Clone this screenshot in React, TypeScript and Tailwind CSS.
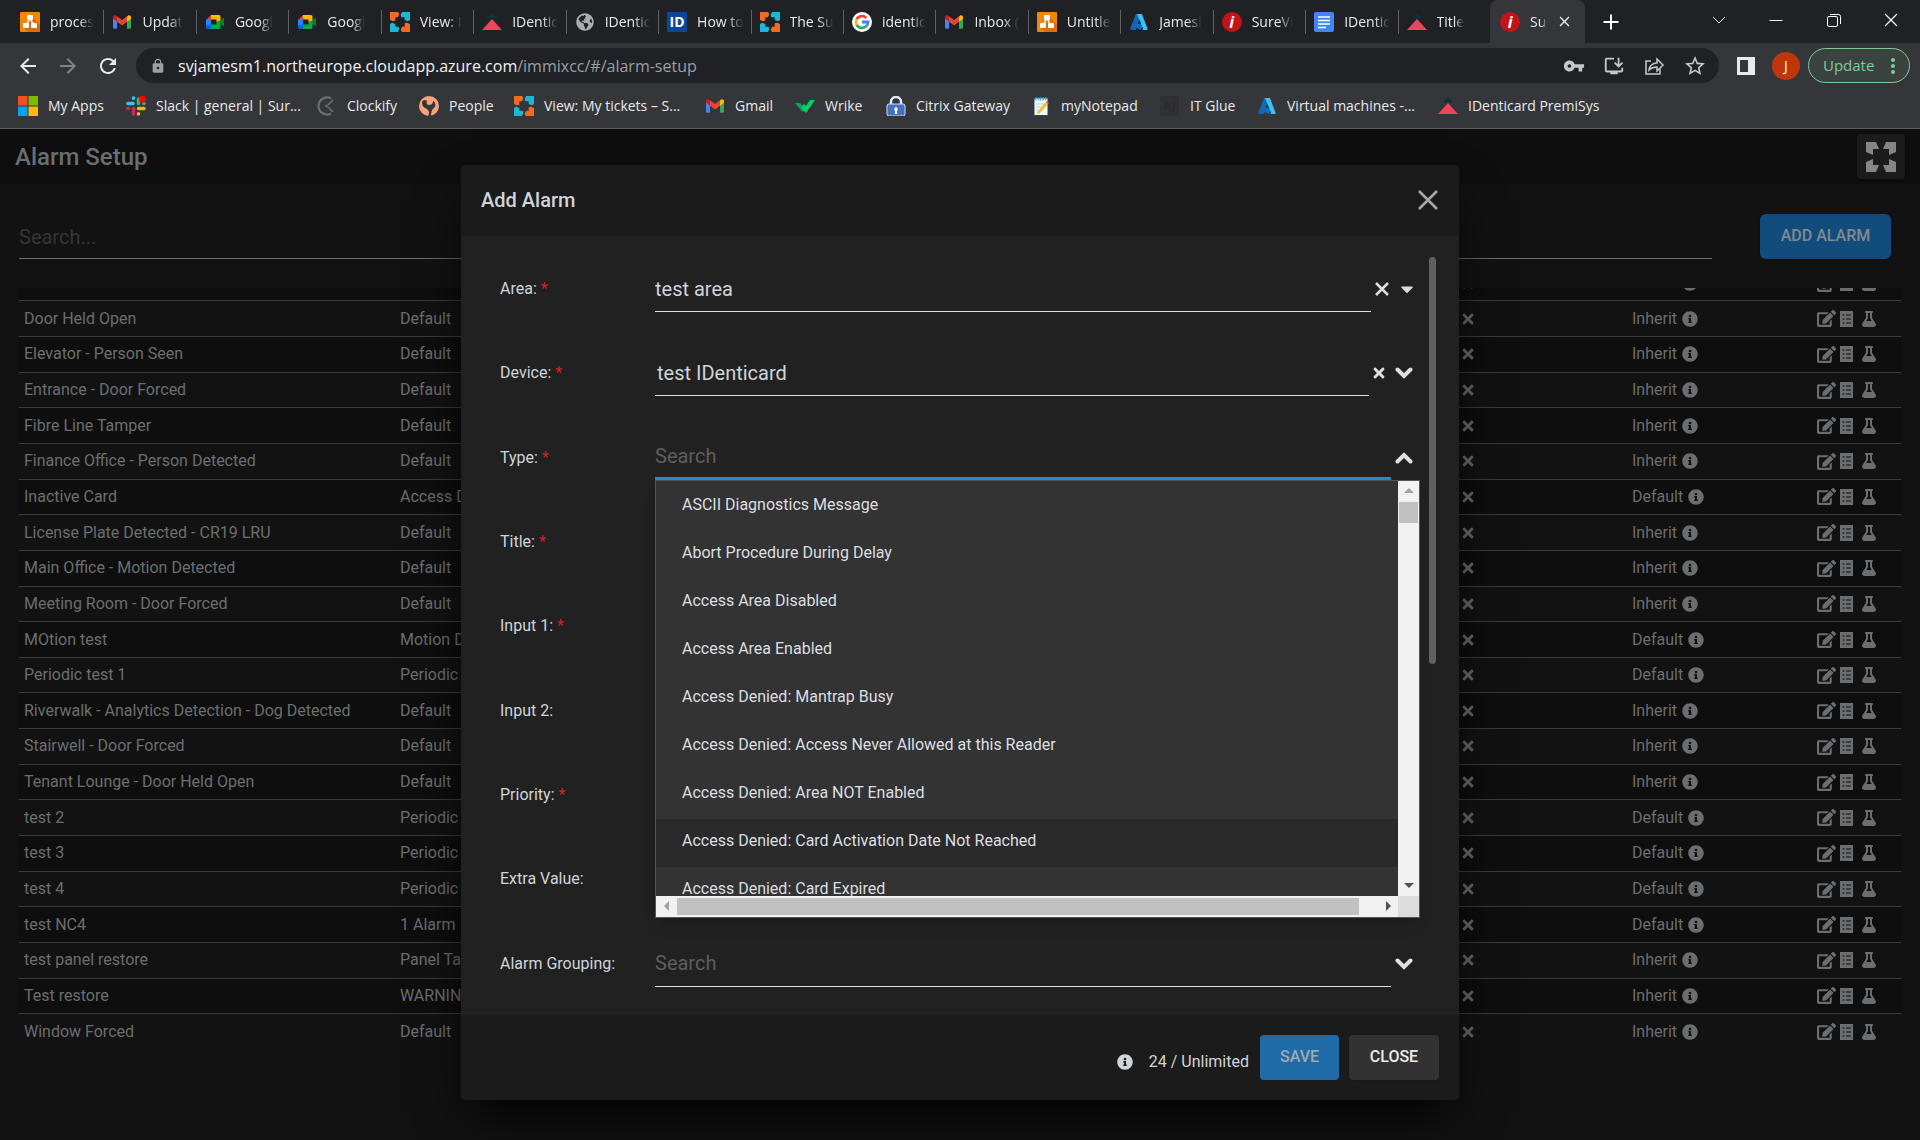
import { type ReactNode } from "react";
import clsx from "clsx";
import {
  FaCaretDown,
  FaEdit,
  FaFlask,
  FaGlobeAmericas,
  FaInfoCircle,
  FaTimes,
} from "react-icons/fa";
import {
  MdArrowBack,
  MdArrowForward,
  MdClose,
  MdInstallDesktop,
  MdLock,
  MdMoreVert,
  MdRefresh,
  MdStarBorder,
  MdVpnKey,
} from "react-icons/md";

/* ---------- site icons ---------- */

function DrawIo() {
  return (
    <svg viewBox="0 0 20 20" className="size-5">
      <rect width="20" height="20" rx="1" fill="#f08705" />
      <path d="M12 4l8 9v7H8l-5-5z" fill="#df6c0c" />
      <path d="M10 6L6 14M10 6l4 8" stroke="#fff" strokeWidth="1.6" />
      <rect x="7" y="3" width="6" height="5" rx="1" fill="#fff" />
      <rect x="3" y="11" width="6" height="5" rx="1" fill="#fff" />
      <rect x="11" y="11" width="6" height="5" rx="1" fill="#fff" />
    </svg>
  );
}

function Gmail() {
  return (
    <svg viewBox="0 0 20 20" className="size-5">
      <path d="M1 6v9.500a1.200 1.200 0 0 0 1.200 1.200H5V8z" fill="#4285f4" />
      <path d="M19 6v9.500a1.200 1.200 0 0 1-1.200 1.200H15V8z" fill="#34a853" />
      <path d="M15 4.500v5.300l4-3V5.200c0-1.700-1.900-2.500-3.200-1.500z" fill="#fbbc04" />
      <path d="M5 9.800V4.300l5 3.800 5-3.800v5.500l-5 3.800z" fill="#ea4335" />
      <path d="M1 5.200v1.600l4 3V4.300l-.8-.6C2.900 2.700 1 3.500 1 5.200z" fill="#c5221f" />
    </svg>
  );
}

function Meet() {
  return (
    <svg viewBox="0 0 20 20" className="size-5">
      <path d="M6 3v5H1z" fill="#ea4335" />
      <path d="M1 8h5v5H1z" fill="#2684fc" />
      <path d="M1 13h5v4H2.500A1.500 1.500 0 0 1 1 15.500z" fill="#0066da" />
      <path d="M6 3h8a1.500 1.500 0 0 1 1.500 1.500V9l-4 1V7.500H6z" fill="#ffba00" />
      <path d="M6 12.500h5.500V10l4-1v6.500A1.500 1.500 0 0 1 14 17H6z" fill="#00ac47" />
      <path d="M14 10l4-4c.5-.4 1-.2 1 .4v7.200c0 .6-.5.800-1 .4z" fill="#00832d" />
    </svg>
  );
}

function SureView() {
  return (
    <svg viewBox="0 0 30 30" className="size-5">
      <path d="M0 0h12l2 3-2 5H8v5l-4 1-4-2z" fill="#f26b21" />
      <path d="M30 0v12l-3 2-5-2V8h-5l-1-4 2-4z" fill="#1fb5d4" />
      <path d="M0 30V18l3-2 5 2v4h5l1 4-2 4z" fill="#1fb5d4" />
      <path d="M30 30H18l-2-3 2-5h4v-5l4-1 4 2z" fill="#f26b21" />
    </svg>
  );
}

function Identicard() {
  return (
    <svg viewBox="0 0 20 20" className="size-5">
      <path d="M10 1l5 5H5z" fill="#08343d" />
      <path d="M10 7l10 11H0z" fill="#ee4460" />
    </svg>
  );
}

function Globe() {
  return <FaGlobeAmericas size={18} className="text-[#a9adb2]" />;
}

function IdBadge() {
  return (
    <span className="flex size-5 items-center justify-center bg-[#0b4696] text-sm font-bold text-white">
      ID
    </span>
  );
}

function Google() {
  return (
    <svg viewBox="0 0 20 20" className="size-5">
      <circle cx="10" cy="10" r="10" fill="#fff" />
      <g fill="none" strokeWidth="2.800">
        <path d="M14.300 6A6 6 0 0 0 4.700 7.200" stroke="#ea4335" />
        <path d="M4.700 7.200a6 6 0 0 0 0 5.600" stroke="#fbbc05" />
        <path d="M4.700 12.800a6 6 0 0 0 9.200 1.700" stroke="#34a853" />
        <path d="M13.900 14.500A6 6 0 0 0 16 10h-6" stroke="#4285f4" />
      </g>
    </svg>
  );
}

function Azure() {
  return (
    <svg viewBox="0 0 20 20" className="size-5">
      <path d="M7 2h5L7 18H2.500c-1 0-1.500-.8-1.200-1.700z" fill="#1267b4" />
      <path d="M7.500 12h8l-4 6-7-4z" fill="#0a6fc2" />
      <path d="M8 2h5l5.500 14.500c.3.800-.2 1.500-1 1.500h-4.700c1 0 1.400-.8 1.100-1.700z" fill="#3ac0f2" />
    </svg>
  );
}

function Immix() {
  return (
    <span className="flex size-5 items-center justify-center rounded-full bg-[#c4121a] font-['Open_Sans',sans-serif] text-base leading-none font-bold text-white italic">
      i
    </span>
  );
}

function Docs() {
  return (
    <svg viewBox="0 0 20 20" className="size-5">
      <rect width="20" height="20" rx="2" fill="#4285f4" />
      <path d="M4 5h12M4 8.500h12M4 12h12M4 15.500h8" stroke="#fff" strokeWidth="1.700" />
    </svg>
  );
}

function Windows() {
  return (
    <svg viewBox="0 0 20 20" className="size-5">
      <path d="M0 0h9.500v9.500H0z" fill="#f25022" />
      <path d="M10.500 0H20v9.500h-9.500z" fill="#7fba00" />
      <path d="M0 10.500h9.500V20H0z" fill="#00a4ef" />
      <path d="M10.500 10.500H20V20h-9.500z" fill="#ffb900" />
    </svg>
  );
}

function Slack() {
  return (
    <svg viewBox="0 0 20 20" className="size-5">
      <g strokeWidth="3.600" strokeLinecap="round">
        <path d="M2 7.500h5M7.500 2v.2" stroke="#36c5f0" />
        <path d="M12.500 3v4.500M18 7.500h-.2" stroke="#2eb67d" />
        <path d="M12.500 12.500H18M12.500 18v-.2" stroke="#ecb22e" />
        <path d="M7.500 12.500V18M2 12.500h.2" stroke="#e01e5a" />
      </g>
      <circle cx="16.500" cy="3.200" r="3.500" fill="#f00" />
    </svg>
  );
}

function Clockify() {
  return (
    <svg viewBox="0 0 20 20" className="size-5" fill="none" stroke="#6b6e72">
      <path d="M14 2.500A8.500 8.500 0 1 0 14 17.500" strokeWidth="2.200" />
      <path d="M11 9l5-5M11 11l5 5" strokeWidth="1.700" />
      <circle cx="9.500" cy="10" r="1" fill="#6b6e72" />
    </svg>
  );
}

function People() {
  return (
    <svg viewBox="0 0 20 20" className="size-5">
      <circle cx="10" cy="10" r="10" fill="#f7a278" />
      <path
        d="M3 7c0-3 3-4 5-2-1 2 0 4 2 4s4-1 4-4c3 1 3 5 1 7-2 1-3 4-3 8H9c2-3 1-5-1-7-3-1-5-3-5-6z"
        fill="#35363a"
      />
      <circle cx="11" cy="5" r="2.500" fill="#f7a278" />
    </svg>
  );
}

function Wrike() {
  return (
    <svg viewBox="0 0 20 20" className="size-5">
      <path d="M0 7h5l5 6-2.500 3z" fill="#08a75b" />
      <path d="M7 10l2-2 2 2 4-6h5l-9 13-4-4z" fill="#08cf65" />
    </svg>
  );
}

function Citrix() {
  return (
    <svg viewBox="0 0 20 20" className="size-5">
      <path d="M5 9V6a5 5 0 0 1 10 0v3" fill="none" stroke="#dfe8f8" strokeWidth="2.500" />
      <rect x="1" y="8" width="18" height="12" rx="2" fill="#4870c0" stroke="#cfdcf5" />
      <path d="M10 11a2 2 0 0 1 1 3.500V18H9v-3.500A2 2 0 0 1 10 11z" fill="#fff" />
    </svg>
  );
}

function Notepad() {
  return (
    <svg viewBox="0 0 20 20" className="size-5">
      <rect x="3" y="2" width="14" height="17.500" rx="1" fill="#f6f8fa" stroke="#1d4a5f" />
      <path d="M4 3h12" stroke="#48b8d8" strokeWidth="3" strokeDasharray="1.500 1" />
      <path d="M5 8h9M5 11h5M5 14h4" stroke="#b7c4cd" />
      <path d="M7 15l8-9 2 2-8 9-3 1z" fill="#f4c027" />
      <path d="M15 6l1-1 2 2-1 1z" fill="#e0483c" />
    </svg>
  );
}

function ItGlue() {
  return (
    <svg viewBox="0 0 20 20" className="size-5" stroke="#2c2c2f" fill="#313135">
      <rect x="1" y="1" width="17" height="18" />
      <path d="M5 15V5l9 10V5M5 9l7 8" strokeWidth="2" fill="none" />
    </svg>
  );
}

/* ---------- data ---------- */

const tabs: { icon: ReactNode; title: string }[] = [
  { icon: <DrawIo />, title: "proces" },
  { icon: <Gmail />, title: "Updat" },
  { icon: <Meet />, title: "Googl" },
  { icon: <Meet />, title: "Googl" },
  { icon: <SureView />, title: "View: I" },
  { icon: <Identicard />, title: "IDentic" },
  { icon: <Globe />, title: "IDentic" },
  { icon: <IdBadge />, title: "How to" },
  { icon: <SureView />, title: "The Su" },
  { icon: <Google />, title: "identic" },
  { icon: <Gmail />, title: "Inbox (" },
  { icon: <DrawIo />, title: "Untitle" },
  { icon: <Azure />, title: "Jamesl" },
  { icon: <Immix />, title: "SureVi" },
  { icon: <Docs />, title: "IDentic" },
  { icon: <Identicard />, title: "Title" },
];

const bookmarks: { icon: ReactNode; title: string }[] = [
  { icon: <Windows />, title: "My Apps" },
  { icon: <Slack />, title: "Slack | general | Sur..." },
  { icon: <Clockify />, title: "Clockify" },
  { icon: <People />, title: "People" },
  { icon: <SureView />, title: "View: My tickets – S..." },
  { icon: <Gmail />, title: "Gmail" },
  { icon: <Wrike />, title: "Wrike" },
  { icon: <Citrix />, title: "Citrix Gateway" },
  { icon: <Notepad />, title: "myNotepad" },
  { icon: <ItGlue />, title: "IT Glue" },
  { icon: <Azure />, title: "Virtual machines -..." },
  { icon: <Identicard />, title: "IDenticard PremiSys" },
];

const alarms: [name: string, type: string, grouping: string][] = [
  ["Door Held Open", "Default", "Inherit"],
  ["Elevator - Person Seen", "Default", "Inherit"],
  ["Entrance - Door Forced", "Default", "Inherit"],
  ["Fibre Line Tamper", "Default", "Inherit"],
  ["Finance Office - Person Detected", "Default", "Inherit"],
  ["Inactive Card", "Access Denied", "Default"],
  ["License Plate Detected - CR19 LRU", "Default", "Inherit"],
  ["Main Office - Motion Detected", "Default", "Inherit"],
  ["Meeting Room - Door Forced", "Default", "Inherit"],
  ["MOtion test", "Motion Detected", "Default"],
  ["Periodic test 1", "Periodic", "Default"],
  ["Riverwalk - Analytics Detection - Dog Detected", "Default", "Inherit"],
  ["Stairwell - Door Forced", "Default", "Inherit"],
  ["Tenant Lounge - Door Held Open", "Default", "Inherit"],
  ["test 2", "Periodic", "Default"],
  ["test 3", "Periodic", "Default"],
  ["test 4", "Periodic", "Default"],
  ["test NC4", "1 Alarm", "Default"],
  ["test panel restore", "Panel Tamper", "Inherit"],
  ["Test restore", "WARNING", "Inherit"],
  ["Window Forced", "Default", "Inherit"],
];

const types = [
  "ASCII Diagnostics Message",
  "Abort Procedure During Delay",
  "Access Area Disabled",
  "Access Area Enabled",
  "Access Denied: Mantrap Busy",
  "Access Denied: Access Never Allowed at this Reader",
  "Access Denied: Area NOT Enabled",
  "Access Denied: Card Activation Date Not Reached",
  "Access Denied: Card Expired",
];

/* ---------- browser ---------- */

function Tab({ icon, title }: { icon: ReactNode; title: string }) {
  return (
    <button className="flex h-6 min-w-0 flex-1 items-center gap-2.5 border-r border-[#5f6368] pl-2 last:border-r-0">
      <span className="flex w-5 shrink-0 justify-center">{icon}</span>
      <span className="mask-r-from-65% text-left whitespace-nowrap">{title}</span>
    </button>
  );
}

function TabStrip() {
  return (
    <div className="flex h-[43px] items-center bg-[#202124] pl-3 text-sm text-[#e8eaed]">
      <div className="flex w-[1478px]">
        {tabs.map((tab, i) => (
          <Tab key={i} {...tab} />
        ))}
      </div>
      <button className="flex h-full w-[95px] items-center gap-2.5 rounded-t-lg bg-[#35363a] pr-3 pl-2.5">
        <span className="shrink-0">
          <Immix />
        </span>
        <span className="mask-r-from-75% text-left">Su</span>
        <MdClose size={17} className="ml-auto shrink-0" />
      </button>
      <button aria-label="New tab" className="ml-4">
        <svg viewBox="0 0 20 20" className="size-5" stroke="#fff" strokeWidth="2">
          <path d="M10 2.500v15M2.500 10h15" />
        </svg>
      </button>
      <div className="ml-auto grid w-[230px] grid-cols-4 justify-items-center pb-1">
        <button aria-label="Search tabs">
          <svg viewBox="0 0 20 20" className="size-5" fill="none" stroke="#e8eaed">
            <path d="M4 7l6 6 6-6" />
          </svg>
        </button>
        <button aria-label="Minimize">
          <svg viewBox="0 0 20 20" className="size-5" fill="none" stroke="#fff">
            <path d="M3.500 10.500h13" />
          </svg>
        </button>
        <button aria-label="Restore">
          <svg viewBox="0 0 20 20" className="size-5" fill="none" stroke="#fff">
            <rect x="3.500" y="6.500" width="10" height="10" rx="1.500" />
            <path d="M6 4.500h8.500a2 2 0 0 1 2 2V14" />
          </svg>
        </button>
        <button aria-label="Close window">
          <svg viewBox="0 0 20 20" className="size-5" fill="none" stroke="#fff" strokeWidth="1.200">
            <path d="M4 4l12 12M16 4L4 16" />
          </svg>
        </button>
      </div>
    </div>
  );
}

function Toolbar() {
  return (
    <div className="flex h-10 items-end bg-[#35363a] pr-2.5 pl-4 text-[#e8eaed]">
      <div className="flex h-[35px] items-center gap-4 pr-4">
        <button aria-label="Back">
          <MdArrowBack size={24} />
        </button>
        <button aria-label="Forward">
          <MdArrowForward size={24} className="text-[#808285]" />
        </button>
        <button aria-label="Reload">
          <MdRefresh size={24} />
        </button>
      </div>
      <div className="flex h-[35px] flex-1 items-center rounded-full bg-[#202124] pr-3 pl-3.5">
        <MdLock size={16} className="text-[#9aa0a6]" />
        <div className="ml-3 flex-1 text-base text-[#9aa0a6]">
          <span className="text-[#f1f3f4]">svjamesm1.northeurope.cloudapp.azure.com</span>
          /immixcc/#/alarm-setup
        </div>
        <div className="flex items-center gap-[18px] text-[#c4c7cb]">
          <MdVpnKey size={22} />
          <MdInstallDesktop size={22} />
          <svg viewBox="0 0 22 22" className="size-[22px]" fill="none" stroke="currentColor" strokeWidth="1.500">
            <path d="M8 6H3v13h14v-5" />
            <path d="M6 15c1-5 4-7 8-7V4l6 6-6 6v-4c-4 0-6 1-8 3z" />
          </svg>
          <MdStarBorder size={24} />
        </div>
      </div>
      <div className="flex h-[35px] items-center pl-[18px]">
        <svg viewBox="0 0 18 18" className="size-[18px]">
          <path d="M0 0h18v18H0z" fill="#e8eaed" />
          <path d="M3 3h8v12H3z" fill="#35363a" />
        </svg>
        <span className="ml-[17px] flex size-7 items-center justify-center rounded-full bg-[#bf360c] text-sm text-white">
          J
        </span>
        <button className="ml-2 flex h-[35px] w-[102px] items-center justify-between rounded-full border border-[#81c995] bg-[#3a4340] pr-1 pl-3.5 text-[15px] text-[#81c995]">
          Update
          <MdMoreVert size={24} />
        </button>
      </div>
    </div>
  );
}

function BookmarksBar() {
  return (
    <nav className="grid h-[46px] grid-cols-[108px_191px_102px_95px_191px_90px_91px_145px_129px_97px_181px_auto] items-center border-b border-[#5c5d60] bg-[#35363a] pl-[18px] text-sm text-[#e8eaed]">
      {bookmarks.map((b) => (
        <a key={b.title} href="#" className="flex items-center gap-2.5 whitespace-nowrap">
          {b.icon}
          {b.title}
        </a>
      ))}
    </nav>
  );
}

/* ---------- alarm list ---------- */

function ListIcon() {
  return (
    <svg viewBox="0 0 13 16" className="h-4 w-[13px]">
      <path d="M0 0h13v16H0z" fill="currentColor" />
      <path d="M2.500 4h2M2.500 8h2M2.500 12h2M6 4h5M6 8h5M6 12h5" stroke="#2b2c2d" strokeWidth="1.300" />
    </svg>
  );
}

function RowActions() {
  return (
    <div className="flex items-center">
      <button aria-label="Edit">
        <FaEdit size={19} />
      </button>
      <button aria-label="Details" className="ml-1">
        <ListIcon />
      </button>
      <button aria-label="Test" className="ml-2">
        <FaFlask size={16} />
      </button>
    </div>
  );
}

function AlarmTable() {
  return (
    <div className="mx-[19px] mt-[29px] flex h-[761px] flex-col justify-end overflow-hidden">
      <table className="h-[783px] w-full shrink-0 table-fixed border-collapse text-base">
        <colgroup>
          <col className="w-[376px]" />
          <col />
          <col className="w-[172px]" />
          <col className="w-[185px]" />
          <col className="w-[84px]" />
        </colgroup>
        <tbody>
          {[["", "", "Inherit"], ...alarms].map(([name, type, grouping], i) => (
            <tr key={i} className="border-b border-[#3b3b3b] odd:bg-[#0e0e0e] last:border-b-0">
              <td className="truncate pl-[5px]">{name}</td>
              <td className="truncate pl-[5px]">{type}</td>
              <td>
                <FaTimes size={16} className="text-[#68696b]" />
              </td>
              <td>
                <span className="flex items-center gap-[5px]">
                  {grouping}
                  <FaInfoCircle size={16} />
                </span>
              </td>
              <td>
                <RowActions />
              </td>
            </tr>
          ))}
        </tbody>
      </table>
    </div>
  );
}

function AlarmSetup() {
  return (
    <div className="bg-[#121212] text-[#6b6e71]">
      <header className="flex h-[55px] items-center justify-between bg-[#0e0e0e] px-[15px]">
        <h1 className="text-2xl font-medium">Alarm Setup</h1>
        <button
          aria-label="Full screen"
          className="flex h-[45px] w-12 items-center justify-center rounded bg-[#1b1b1b] text-[#858585] shadow"
        >
          <svg viewBox="0 0 30 30" className="size-[30px]" fill="currentColor">
            <path d="M0 0h10l3 7H7v6l-7-3zM30 0H20l-3 7h6v6l7-3zM0 30h10l3-7H7v-6l-7 3zM30 30H20l-3-7h6v-6l7 3z" />
          </svg>
        </button>
      </header>
      <div className="flex items-start pt-[30px] pr-[29px] pl-[19px]">
        <input
          aria-label="Search alarms"
          placeholder="Search..."
          className="h-[45px] flex-1 border-b border-[#6c6c6c] pt-0.5 text-xl placeholder:text-[#363636]"
        />
        <button className="ml-12 h-[45px] w-[131px] rounded-md bg-[#114c7c] pb-0.5 text-base font-medium text-[#84898e] shadow">
          ADD ALARM
        </button>
      </div>
      <AlarmTable />
      <div className="h-[90px]" />
    </div>
  );
}

/* ---------- dialog ---------- */

function Field({
  label,
  id,
  required,
  children,
}: {
  label: string;
  id: string;
  required?: boolean;
  children?: ReactNode;
}) {
  return (
    <div className="relative flex items-center">
      <label htmlFor={id} className="w-[155px] shrink-0 pt-0.5 text-base">
        {label}
        {required && <span className="text-[#d32027]"> *</span>}
      </label>
      <div className="flex h-12 flex-1 items-center">
        {children ?? <input id={id} className="h-full w-full border-b border-[#e0e0e0]" />}
      </div>
    </div>
  );
}

function Chevron({ up }: { up?: boolean }) {
  return (
    <svg
      viewBox="0 0 18 14"
      className="ml-1 h-3.5 w-[18px] shrink-0"
      fill="none"
      stroke="#e0e0e0"
      strokeWidth="4"
      strokeLinecap="round"
    >
      <path d={up ? "M2.500 10.500L9 4l6.500 6.500" : "M2.500 3.500L9 10l6.500-6.500"} />
    </svg>
  );
}

function ScrollButton({ points, active, label }: { points: string; active?: boolean; label: string }) {
  return (
    <button aria-label={label} className="flex size-[21px] shrink-0 items-center justify-center">
      <svg viewBox="0 0 10 10" className="size-2.5">
        <polygon points={points} fill={active ? "#505050" : "#a3a3a3"} />
      </svg>
    </button>
  );
}

function TypeMenu() {
  return (
    <div className="absolute top-[65px] right-[-5px] left-[155px] z-10 border border-[#555] shadow-lg">
      <div className="flex h-[415px] bg-[#333]">
        <ul className="flex-1 overflow-hidden pt-0.5 text-[#dcdfe2]">
          {types.map((t, i) => (
            <li key={t} className={clsx("h-12 pt-2.5 pl-[26px] text-base", i === 7 && "bg-[#2a2a2a]")}>
              {t}
            </li>
          ))}
        </ul>
        <div className="flex w-[21px] flex-col items-center bg-[#f1f1f1]">
          <ScrollButton label="Scroll up" points="0,7 5,2 10,7" />
          <div className="h-[21px] w-[19px] bg-[#c1c1c1]" />
          <div className="mt-auto">
            <ScrollButton label="Scroll down" points="0,3 5,8 10,3" active />
          </div>
        </div>
      </div>
      <div className="flex h-[21px] bg-[#dcdcdc]">
        <div className="flex flex-1 items-center bg-[#f1f1f1]">
          <ScrollButton label="Scroll left" points="7,0 2,5 7,10" />
          <div className="mr-[18px] h-[17px] flex-1 bg-[#c1c1c1]" />
          <ScrollButton label="Scroll right" points="3,0 8,5 3,10" active />
        </div>
        <div className="w-[21px]" />
      </div>
    </div>
  );
}

const field = "min-w-0 flex-1 pt-0.5 text-xl placeholder:text-[#5e5e5e]";

function AddAlarmDialog() {
  return (
    <div
      role="dialog"
      aria-label="Add Alarm"
      className="w-[998px] overflow-hidden rounded bg-[#1b1b1b] text-[#d0d4da] shadow-2xl shadow-black"
    >
      <div className="flex h-[71px] items-center justify-between px-5 pb-0.5">
        <h2 className="text-xl font-medium">Add Alarm</h2>
        <button aria-label="Close dialog" className="text-[#a8a8a8]">
          <svg viewBox="0 0 22 22" className="size-[22px]" stroke="currentColor" strokeWidth="2.500">
            <path d="M2 2l18 18M20 2L2 20" />
          </svg>
        </button>
      </div>
      <div className="flex h-[779px] bg-[#212121] pr-[23px] pl-[39px]">
        <div className="grid flex-1 auto-rows-fr py-2.5">
          <Field label="Area:" id="area" required>
            <input
              id="area"
              defaultValue="test area"
              className={clsx(field, "h-full border-b border-[#e0e0e0]")}
            />
            <div className="flex w-11 items-center justify-end gap-2 pt-0.5 text-[#dcdcdc]">
              <svg viewBox="0 0 14 14" className="size-3.5" stroke="currentColor" strokeWidth="2.600">
                <path d="M1 1l12 12M13 1L1 13" />
              </svg>
              <FaCaretDown size={20} className="-mr-0.5" />
            </div>
          </Field>
          <Field label="Device:" id="device" required>
            <input
              id="device"
              defaultValue="test IDenticard"
              className={clsx(field, "h-full border-b border-[#e0e0e0] pl-0.5")}
            />
            <div className="flex w-[46px] items-center justify-end gap-1 pt-0.5 pr-0.5 text-[#e0e0e0]">
              <FaTimes size={16} />
              <Chevron />
            </div>
          </Field>
          <Field label="Type:" id="type" required>
            <input
              id="type"
              placeholder="Search"
              className={clsx(field, "h-[47px] self-start border-b-[3px] border-[#1e88e5]")}
            />
            <div className="pt-0.5 pr-0.5">
              <Chevron up />
            </div>
            <TypeMenu />
          </Field>
          <Field label="Title:" id="title" required />
          <Field label="Input 1:" id="input1" required />
          <Field label="Input 2:" id="input2" />
          <Field label="Priority:" id="priority" required />
          <Field label="Extra Value:" id="extra" />
          <Field label="Alarm Grouping:" id="grouping">
            <input
              id="grouping"
              placeholder="Search"
              className={clsx(field, "h-full border-b border-[#e0e0e0]")}
            />
            <div className="pt-0.5 pr-0.5">
              <Chevron />
            </div>
          </Field>
        </div>
        <div className="mt-[21px] ml-3.5 h-[407px] w-[7px] rounded-full bg-[#606060]" />
      </div>
      <div className="flex h-[85px] items-center justify-end pr-5">
        <span className="mr-[11px] flex items-center gap-4 pt-2 text-base">
          <FaInfoCircle size={16} />
          24 / Unlimited
        </span>
        <button className="h-[45px] w-[79px] rounded bg-[#1e6ba8] pb-0.5 text-base font-medium text-[#a0a9b0]">
          SAVE
        </button>
        <button className="ml-2.5 h-[45px] w-[90px] rounded bg-[#323232] pb-0.5 text-base font-medium text-[#ececec] shadow">
          CLOSE
        </button>
      </div>
    </div>
  );
}

export default function App() {
  return (
    <div className="flex min-h-screen flex-col bg-[#121212]">
      <div className="font-['Open_Sans',sans-serif]">
        <TabStrip />
        <Toolbar />
        <BookmarksBar />
      </div>
      <main className="relative font-[Roboto,sans-serif]">
        <AlarmSetup />
        <div className="absolute inset-x-0 top-9 flex justify-center">
          <AddAlarmDialog />
        </div>
      </main>
    </div>
  );
}
